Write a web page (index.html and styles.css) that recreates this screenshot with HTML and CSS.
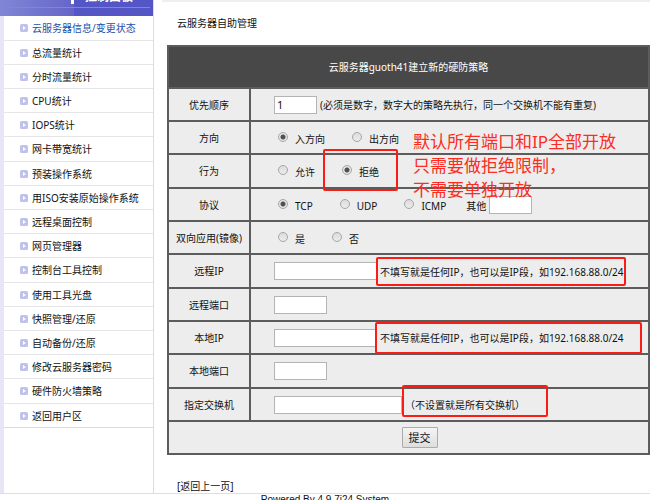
FILE: index.html
```html
<!DOCTYPE html>
<html lang="zh-CN">
<head>
<meta charset="utf-8">
<title>云服务器自助管理</title>
<link rel="stylesheet" href="styles.css">
</head>
<body>
<svg class="defs" aria-hidden="true">
  <symbol id="arrow" viewBox="0 0 8 8"><rect width="8" height="8" rx="1.5" fill="#c0c2ea"/><path d="M3 2l2.8 2L3 6z" fill="#fff"/></symbol>
</svg>
<div class="shell">
  <aside class="sidebar">
    <div class="panel-head"><span class="panel-mark"></span><span class="panel-title">控制面板</span></div>
    <nav class="menu">
      <a class="current" href="#"><svg><use href="#arrow"/></svg>云服务器信息/变更状态</a>
      <a href="#"><svg><use href="#arrow"/></svg>总流量统计</a>
      <a href="#"><svg><use href="#arrow"/></svg>分时流量统计</a>
      <a href="#"><svg><use href="#arrow"/></svg>CPU统计</a>
      <a href="#"><svg><use href="#arrow"/></svg>IOPS统计</a>
      <a href="#"><svg><use href="#arrow"/></svg>网卡带宽统计</a>
      <a href="#"><svg><use href="#arrow"/></svg>预装操作系统</a>
      <a href="#"><svg><use href="#arrow"/></svg>用ISO安装原始操作系统</a>
      <a href="#"><svg><use href="#arrow"/></svg>远程桌面控制</a>
      <a href="#"><svg><use href="#arrow"/></svg>网页管理器</a>
      <a href="#"><svg><use href="#arrow"/></svg>控制台工具控制</a>
      <a href="#"><svg><use href="#arrow"/></svg>使用工具光盘</a>
      <a href="#"><svg><use href="#arrow"/></svg>快照管理/还原</a>
      <a href="#"><svg><use href="#arrow"/></svg>自动备份/还原</a>
      <a href="#"><svg><use href="#arrow"/></svg>修改云服务器密码</a>
      <a href="#"><svg><use href="#arrow"/></svg>硬件防火墙策略</a>
      <a href="#"><svg><use href="#arrow"/></svg>返回用户区</a>
    </nav>
  </aside>
  <main class="main">
    <div class="topbar"></div>
    <div class="page-title">云服务器自助管理</div>
    <form class="policy">
      <table>
        <thead><tr><th colspan="2">云服务器guoth41建立新的硬防策略</th></tr></thead>
        <tbody>
          <tr><th><label for="priority">优先顺序</label></th>
            <td><div class="field"><input class="w-s" id="priority" type="text" value="1"><span>(必须是数字，数字大的策略先执行，同一个交换机不能有重复)</span></div></td></tr>
          <tr><th>方向</th>
            <td><div class="options"><label><input type="radio" name="dir" checked><span>入方向</span></label><label><input type="radio" name="dir"><span>出方向</span></label></div></td></tr>
          <tr><th>行为</th>
            <td><div class="options"><label><input type="radio" name="act"><span>允许</span></label><label><input type="radio" name="act" checked><span>拒绝</span></label></div></td></tr>
          <tr><th>协议</th>
            <td><div class="options"><label><input type="radio" name="proto" checked><span>TCP</span></label><label><input type="radio" name="proto"><span>UDP</span></label><label><input type="radio" name="proto"><span>ICMP</span></label><label class="other"><span>其他</span><input class="w-s" type="text"></label></div></td></tr>
          <tr><th>双向应用(镜像)</th>
            <td><div class="options"><label><input type="radio" name="mirror"><span>是</span></label><label><input type="radio" name="mirror"><span>否</span></label></div></td></tr>
          <tr><th><label for="rip">远程IP</label></th>
            <td><div class="field"><input class="w-l" id="rip" type="text"><span>不填写就是任何IP，也可以是IP段，如192.168.88.0/24</span></div></td></tr>
          <tr><th><label for="rport">远程端口</label></th>
            <td><div class="field"><input class="w-m" id="rport" type="text"></div></td></tr>
          <tr><th><label for="lip">本地IP</label></th>
            <td><div class="field"><input class="w-l" id="lip" type="text"><span>不填写就是任何IP，也可以是IP段，如192.168.88.0/24</span></div></td></tr>
          <tr><th><label for="lport">本地端口</label></th>
            <td><div class="field"><input class="w-m" id="lport" type="text"></div></td></tr>
          <tr><th><label for="switch">指定交换机</label></th>
            <td><div class="field"><input class="w-xl" id="switch" type="text"><span>（不设置就是所有交换机）</span></div></td></tr>
          <tr><td class="submit" colspan="2"><button type="button">提交</button></td></tr>
        </tbody>
      </table>
      <div class="mark mark-deny"></div>
      <div class="mark mark-remote"></div>
      <div class="mark mark-local"></div>
      <div class="mark mark-switch"></div>
      <div class="note">默认所有端口和IP全部开放<br>只需要做拒绝限制，<br>不需要单独开放</div>
    </form>
    <a class="back" href="#">[返回上一页]</a>
  </main>
</div>
<footer class="footer">Powered By 4.9.7i24 System</footer>
</body>
</html>
```

FILE: styles.css
```css
* { box-sizing: border-box; }

body {
  margin: 0;
  height: 100vh;
  overflow: hidden;
  background: #fff;
  color: #111;
  font: 10px/14px "Noto Sans", "Noto Sans CJK SC", sans-serif;
}

a { color: inherit; text-decoration: none; }
.defs { position: absolute; width: 0; height: 0; }

.shell {
  display: flex;
  margin-right: 16px;
  height: 494px;
  border-bottom: 1px solid #dedee0;
}

/* Sidebar */
.sidebar {
  flex: 0 0 154px;
  border-right: 1px solid #dcdce0;
  border-left: 4px solid #e8e5f6;
}

.panel-head {
  display: flex;
  align-items: flex-start;
  gap: 11px;
  height: 16px;
  margin-left: -4px;
  padding-left: 71px;
  overflow: hidden;
  color: #fff;
  background:
    linear-gradient(#8583d8, #8583d8) 7px 7px / 143px 1px no-repeat,
    linear-gradient(100deg, #8187d6, #6464c8) 0 0 / 74px 100% no-repeat,
    #5556c6;
}
.panel-mark { width: 3px; height: 4px; background: #fff; }
.panel-title { margin-top: -11px; font-size: 12px; line-height: 16px; font-weight: bold; }

.menu a {
  display: flex;
  align-items: center;
  gap: 4px;
  height: 24px;
  padding-left: 16px;
  border-bottom: 1px solid #e6e6e8;
}
.menu a:nth-child(5n + 1) { height: 25px; }
.menu a:last-child { border-color: #dcdce0; }
.menu .current { color: #2450a8; }
.menu svg { width: 8px; height: 8px; }

/* Main column */
.main { flex: 1; padding-left: 13px; }
.topbar { height: 2px; margin-left: -5px; background: #efefef; }
.page-title { margin: 14px 0 15px 10px; }

.policy { position: relative; }
.policy table { width: 100%; border-collapse: collapse; background: #ededed; }
.policy th, .policy td {
  height: 33px;
  padding: 0;
  border: 2px solid #5c5c5c;
  font-weight: normal;
}
.policy tbody th { width: 82px; }
.policy tbody tr:nth-child(3n) > * { height: 34px; }
.policy thead th { height: 42px; background: #484848; color: #fff; }

.field, .options { display: flex; align-items: center; padding-left: 23px; }
.field { gap: 3px; }
.options { gap: 27px; padding-left: 27px; }
.options label { display: flex; align-items: center; gap: 7px; }
.options .other { gap: 3px; margin-left: -7px; }
.options span { padding-top: 2px; }
.field span { padding-top: 1px; }

input[type="text"] {
  height: 18px;
  margin: 0;
  padding: 0 2px;
  border: 1px solid #b4b4b4;
  background: #fff;
  color: #111;
  font: inherit;
  font-size: 11px;
}
.w-s { width: 43px; }
.w-m { width: 53px; }
.w-l { width: 103px; }
.w-xl { width: 128px; }

input[type="radio"] {
  appearance: none;
  width: 10px;
  height: 10px;
  margin: 0 0 2px;
  border: 1px solid #a6a6a6;
  border-radius: 50%;
  background: linear-gradient(#dcdcdc, #ececec);
}
input[type="radio"]:checked {
  background: radial-gradient(circle, #505050 0 2px, #e6e6e6 3px);
}

.policy .submit { padding-left: 22px; text-align: center; }
button {
  width: 36px;
  height: 21px;
  padding: 0;
  border: 1px solid #ababab;
  border-radius: 1px;
  background: linear-gradient(#f4f4f4, #dedede);
  color: #111;
  font: inherit;
  font-size: 11px;
  vertical-align: middle;
}

/* Red annotations lying over the form */
.mark { position: absolute; border: 2px solid #fb1d15; border-radius: 2px; }
.mark-deny { left: 156px; top: 104px; width: 75px; height: 42px; }
.mark-remote { left: 209px; top: 212px; width: 250px; height: 29px; }
.mark-local { left: 208px; top: 277px; width: 267px; height: 32px; }
.mark-switch { left: 235px; top: 340px; width: 146px; height: 32px; }
.note {
  position: absolute;
  left: 246px;
  top: 85px;
  color: #fb2d22;
  font-size: 17px;
  line-height: 24px;
  white-space: nowrap;
}

.back { display: inline-block; margin: 24px 0 0 10px; }

.footer {
  margin-right: 16px;
  text-align: center;
  font: 10px/12px "Liberation Sans", sans-serif;
}
```
